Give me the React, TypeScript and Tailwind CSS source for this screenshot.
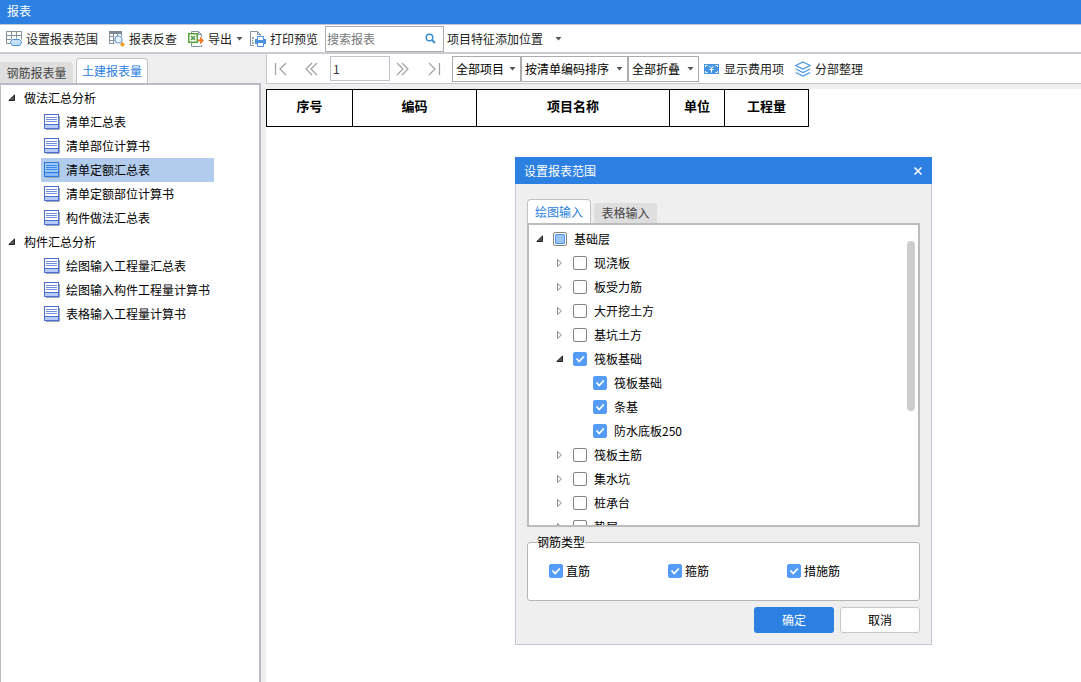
import { useState, type ReactNode } from "react";

function GridRangeIcon() {
  return (
    <svg width="16" height="16" viewBox="0 0 16 16" fill="none" aria-hidden="true">
      <path d="M.5 .5h15v8M.5 .5v12h4M.5 4.500h15M.5 8.500h4.500M5.500 .5v8M10.500 .5v7" stroke="#84919c" />
      <path d="M6.500 8.500h7l2 2v1l-2 3h-7l-2-3v-1z" fill="#c5defa" stroke="#4a90e2" />
    </svg>
  );
}

function GridSearchIcon() {
  return (
    <svg width="16" height="16" viewBox="0 0 16 16" fill="none" aria-hidden="true">
      <path d="M0 0h13v3H0z" fill="#7d8a96" />
      <path d="M.5 2v10.500h5M.5 5.500h5M.5 9.500h5M4.500 2v10M8.500 2v3M12.500 2v3" stroke="#84919c" />
      <circle cx="9.500" cy="8.500" r="3.500" fill="#e8f2fd" stroke="#6f9ed8" strokeWidth="1.200" />
      <path d="M13.300 11l2.700 2.500-2.500 2.500-2.500-2.500z" fill="#f39a1e" />
    </svg>
  );
}

function ExportIcon() {
  return (
    <svg width="16" height="16" viewBox="0 0 16 16" fill="none" aria-hidden="true">
      <path d="M3.500 2V.5h7l3 3V6M3.500 12v3.500h10V14M10.500.5v3h3" stroke="#84919c" />
      <rect x=".75" y="2.750" width="8.500" height="8.500" fill="#fff" stroke="#5aa53f" strokeWidth="1.500" />
      <path d="M3 5l4 4M7 5l-4 4" stroke="#4f9a3c" strokeWidth="1.600" />
      <path d="M10 8.500h2V5.500l4 4-4 4v-3h-2z" fill="#f07d2e" />
    </svg>
  );
}

function PrintPreviewIcon() {
  return (
    <svg width="16" height="16" viewBox="0 0 16 16" fill="none" aria-hidden="true">
      <path d="M4 14.500H.5V.5h7l3 3v1M7.500.5v3h3" stroke="#84919c" />
      <path d="M2 7h2M2 9.500h1M2 12h2" stroke="#84919c" strokeWidth="1.500" />
      <path d="M5 8h11v5H5z" fill="#4a90e2" />
      <path d="M7.500 5.500h6v4h-6zM7.500 11.500h6v4h-6z" fill="#fff" stroke="#4a90e2" />
    </svg>
  );
}

function MoneyIcon() {
  return (
    <svg width="16" height="16" viewBox="0 0 16 16" aria-hidden="true">
      <path d="M0 3h15v10H0z" fill="#4795e6" />
      <path d="M1.500 6V4.500h2M11.500 4.500h2V6M1.500 10v1.500h2M11.500 11.500h2V10" fill="none" stroke="#fff" />
      <path d="M5.500 5l2 2.500 2-2.500M7.500 7.500v4M5.500 8.500h4" fill="none" stroke="#fff" />
    </svg>
  );
}

function LayersIcon() {
  return (
    <svg width="16" height="16" viewBox="0 0 16 16" fill="none" stroke="#4795e6" strokeWidth="1.200" aria-hidden="true">
      <path d="M8 1l7.200 3.500L8 8 .8 4.500zM.8 8L8 11.500 15.200 8M.8 11.500L8 15l7.200-3.500" />
    </svg>
  );
}

function ReportIcon({ active }: { active?: boolean }) {
  return (
    <svg width="16" height="16" viewBox="0 0 16 16" aria-hidden="true">
      <path d="M2 15.500h13.500V2" fill="none" stroke="#a0a8b8" />
      <rect x=".5" y=".5" width="14" height="14" fill={active ? "#9cc8fb" : "#fff"} stroke={active ? "#2c78dc" : "#4a6fcc"} />
      <path d="M1 11h13v3H1z" fill={active ? "#84b8fb" : "#b9ccff"} />
      <path d="M2 3.500h11M2 5.500h11M2 7.500h11" stroke={active ? "#3f87e4" : "#6f8fdc"} />
      <path d="M1 10.500h13" stroke={active ? "#2c78dc" : "#4a6fcc"} />
    </svg>
  );
}

function DownArrow() {
  return (
    <svg width="7" height="4" viewBox="0 0 7 4" fill="#555" aria-hidden="true">
      <path d="M.5 0h6l-3 3.500z" />
    </svg>
  );
}

function Expander({ open }: { open: boolean }) {
  return (
    <svg width="8" height="8" viewBox="0 0 8 8" aria-hidden="true">
      {open ? (
        <path d="M6.500 1v5.500H.8z" fill="#555" stroke="#222" />
      ) : (
        <path d="M1.500 .5v7L5.500 4z" fill="#fff" stroke="#8a8a8a" />
      )}
    </svg>
  );
}

function ToolButton({ icon, label, arrow }: { icon: ReactNode; label: string; arrow?: boolean }) {
  return (
    <button type="button" className={`flex h-6 shrink-0 items-center gap-1 pl-1 text-[#222] ${arrow ? "pr-0" : "pr-1"}`}>
      {icon}
      <span>{label}</span>
      {arrow && <DownArrow />}
    </button>
  );
}

function NavButton({ label, d }: { label: string; d: string }) {
  return (
    <button type="button" aria-label={label} className="flex h-6 w-[30px] shrink-0 items-center pl-1">
      <svg width="16" height="14" viewBox="0 0 16 14" fill="none" stroke="#a0a0a0" strokeWidth="1.200" aria-hidden="true">
        <path d={d} />
      </svg>
    </button>
  );
}

function Dropdown({ label, text, box, width }: { label: string; text: string; box?: boolean; width: string }) {
  return (
    <div
      className={`grid shrink-0 items-center ${width} ${box ? "h-[26px] border border-[#acacac] text-black" : "h-6 text-[#222]"}`}
    >
      <select
        aria-label={label}
        className={`col-start-1 row-start-1 h-full w-full appearance-none bg-transparent outline-none ${box ? "pl-[3px]" : ""}`}
      >
        <option>{text}</option>
      </select>
      <span className={`pointer-events-none col-start-1 row-start-1 justify-self-end ${box ? "pr-1" : "pr-0"}`}>
        <DownArrow />
      </span>
    </div>
  );
}

function Check({ label, initial, partial, gap }: { label: string; initial?: boolean; partial?: boolean; gap: string }) {
  const [on, setOn] = useState(Boolean(initial));
  return (
    <label className={`flex items-center text-black ${gap}`}>
      <span className="grid size-[14px]">
        <input
          type="checkbox"
          checked={on}
          onChange={() => setOn(!on)}
          className="col-start-1 row-start-1 size-[14px] appearance-none rounded-[2px] border border-[#858585] bg-white checked:border-[#549cf8] checked:bg-[#549cf8]"
        />
        {on && (
          <svg width="14" height="14" viewBox="0 0 14 14" fill="none" className="pointer-events-none col-start-1 row-start-1">
            <path d="M3.500 6.500L6.200 9.500 10.800 4.500" stroke="#fff" strokeWidth="1.800" />
          </svg>
        )}
        {partial && !on && (
          <span className="pointer-events-none col-start-1 row-start-1 m-[2px] rounded-[1px] border border-[#4b97f7] bg-[#99c5fb]" />
        )}
      </span>
      <span>{label}</span>
    </label>
  );
}

const reportGroups = [
  { title: "做法汇总分析", items: ["清单汇总表", "清单部位计算书", "清单定额汇总表", "清单定额部位计算书", "构件做法汇总表"] },
  { title: "构件汇总分析", items: ["绘图输入工程量汇总表", "绘图输入构件工程量计算书", "表格输入工程量计算书"] },
];

type Node = { label: string; level: 0 | 1 | 2; open?: boolean; checked?: boolean; partial?: boolean };

const componentTree: Node[] = [
  { label: "基础层", level: 0, open: true, partial: true },
  { label: "现浇板", level: 1 },
  { label: "板受力筋", level: 1 },
  { label: "大开挖土方", level: 1 },
  { label: "基坑土方", level: 1 },
  { label: "筏板基础", level: 1, open: true, checked: true },
  { label: "筏板基础", level: 2, checked: true },
  { label: "条基", level: 2, checked: true },
  { label: "防水底板250", level: 2, checked: true },
  { label: "筏板主筋", level: 1 },
  { label: "集水坑", level: 1 },
  { label: "桩承台", level: 1 },
  { label: "垫层", level: 1 },
];

const indents = ["pl-[7px]", "pl-[27px]", "pl-[47px]"];

function Sidebar() {
  const [selected, setSelected] = useState("清单定额汇总表");
  return (
    <aside className="flex w-[261px] shrink-0 flex-col pt-1">
      <div role="tablist" className="flex items-end gap-[3px]">
        <button type="button" role="tab" aria-selected="false" className="h-[21px] w-[73px] rounded-tr bg-[#dedede] text-[#444]">
          钢筋报表量
        </button>
        <button
          type="button"
          role="tab"
          aria-selected="true"
          className="h-[25px] w-[72px] rounded-t border border-b-0 border-[#bfc4cb] bg-white text-[#2b7fe1]"
        >
          土建报表量
        </button>
      </div>
      <nav className="flex-1 border-t-2 border-r-2 border-l border-[#b9bcc2] bg-white pt-px">
        {reportGroups.map((group) => (
          <section key={group.title}>
            <h2 className="flex h-6 items-center gap-2 pl-[7px] text-black">
              <Expander open />
              {group.title}
            </h2>
            {group.items.map((item) => (
              <button
                key={item}
                type="button"
                onClick={() => setSelected(item)}
                className={`ml-10 flex h-6 w-[173px] items-center gap-[6px] pl-[3px] text-black ${item === selected ? "bg-[#b1ccec]" : ""}`}
              >
                <ReportIcon active={item === selected} />
                {item}
              </button>
            ))}
          </section>
        ))}
      </nav>
    </aside>
  );
}

function ReportArea() {
  return (
    <main className="flex min-w-0 flex-1 flex-col">
      <div className="flex h-[30px] items-center border-b border-l border-[#c3c8cf] bg-white pl-px">
        <div className="flex items-center gap-px">
          <NavButton label="首页" d="M3.500 1v12M14 1L8 7l6 6" />
          <NavButton label="上一页" d="M9 1L3 7l6 6M14 1L8 7l6 6" />
          <input aria-label="页码" defaultValue="1" className="h-[25px] w-[60px] border border-[#bfc4cb] px-[2px] text-[#333] outline-none" />
          <NavButton label="下一页" d="M2 1l6 6-6 6M7 1l6 6-6 6" />
          <NavButton label="末页" d="M13.500 1v12M3 1l6 6-6 6" />
        </div>
        <div className="flex">
          <Dropdown box label="项目范围" text="全部项目" width="w-[69px]" />
          <Dropdown box label="排序方式" text="按清单编码排序" width="w-[107px]" />
          <Dropdown box label="折叠方式" text="全部折叠" width="w-[71px]" />
        </div>
        <div className="flex gap-[3px] pl-px">
          <ToolButton icon={<MoneyIcon />} label="显示费用项" />
          <ToolButton icon={<LayersIcon />} label="分部整理" />
        </div>
      </div>
      <div className="mt-[5px] flex-1 bg-white">
        <table className="w-[543px] table-fixed border-collapse text-[13px] text-black">
          <thead>
            <tr className="h-[37px]">
              <th className="w-[86px] border border-black pb-1">序号</th>
              <th className="w-[124px] border border-black pb-1">编码</th>
              <th className="w-[193px] border border-black pb-1">项目名称</th>
              <th className="w-[55px] border border-black pb-1">单位</th>
              <th className="w-[84px] border border-black pb-1">工程量</th>
            </tr>
          </thead>
        </table>
      </div>
    </main>
  );
}

function RangeDialog() {
  return (
    <div
      role="dialog"
      aria-label="设置报表范围"
      className="absolute top-[157px] left-[515px] flex w-[417px] flex-col border border-t-0 border-[#bfc8d4] bg-[#efefef]"
    >
      <header className="-mx-px flex h-[27px] items-center justify-between bg-[#2c80e2] pr-[9px] pl-[9px] text-white">
        <h2>设置报表范围</h2>
        <button type="button" aria-label="关闭">
          <svg width="10" height="8" viewBox="0 0 10 8" fill="none" stroke="#fff" strokeWidth="1.500" aria-hidden="true">
            <path d="M1.500.5l7 7M8.500.5l-7 7" />
          </svg>
        </button>
      </header>
      <div className="flex flex-col px-[11px] pt-[15px] pb-[11px]">
        <div role="tablist" className="flex items-end gap-[3px]">
          <button
            type="button"
            role="tab"
            aria-selected="true"
            className="h-6 w-16 rounded-t border border-b-0 border-[#bfc4cb] bg-white text-[#2b7fe1]"
          >
            绘图输入
          </button>
          <button type="button" role="tab" aria-selected="false" className="h-5 w-[63px] rounded-t bg-[#dedede] text-[#444]">
            表格输入
          </button>
        </div>
        <div className="flex h-[304px] justify-between overflow-hidden border-2 border-[#bbbcbe] bg-white pt-[2px] pr-[3px]">
          <ul>
            {componentTree.map((node, i) => (
              <li key={i} className={`flex h-6 items-center gap-[9px] ${indents[node.level]}`}>
                {node.level < 2 ? <Expander open={Boolean(node.open)} /> : <span className="w-2" />}
                <Check label={node.label} initial={node.checked} partial={node.partial} gap="gap-[7px]" />
              </li>
            ))}
          </ul>
          <div className="mt-[14px] h-[170px] w-2 rounded-full bg-[#cdcdcd]" />
        </div>
        <fieldset className="mt-[7px] rounded-[3px] border border-[#b4b4b4] bg-white pb-5 pl-[21px]">
          <legend className="-ml-3 h-4 leading-4 text-black">钢筋类型</legend>
          <div className="grid grid-cols-[119px_119px_119px] pt-3">
            <Check label="直筋" initial gap="gap-[3px]" />
            <Check label="箍筋" initial gap="gap-[3px]" />
            <Check label="措施筋" initial gap="gap-[3px]" />
          </div>
        </fieldset>
        <div className="mt-[6px] flex justify-end gap-[6px]">
          <button type="button" className="h-[26px] w-20 rounded-[3px] bg-[#2c80e2] text-white">
            确定
          </button>
          <button type="button" className="h-[26px] w-20 rounded-[3px] border border-[#c8c8c8] bg-white text-black">
            取消
          </button>
        </div>
      </div>
    </div>
  );
}

export default function App() {
  return (
    <div className="relative flex min-h-screen flex-col bg-[#efefef] font-['Noto_Sans_CJK_SC',sans-serif] text-[12px] leading-[18px]">
      <header className="flex h-[25px] items-center border-b border-[#bfc8d4] bg-[#2c80e2] pl-[7px] text-white">
        <h1 className="pb-[2px]">报表</h1>
      </header>
      <div className="flex h-[29px] items-center gap-[3px] border-b-2 border-[#c8ccd2] bg-white pl-[2px]">
        <ToolButton icon={<GridRangeIcon />} label="设置报表范围" />
        <ToolButton icon={<GridSearchIcon />} label="报表反查" />
        <ToolButton icon={<ExportIcon />} label="导出" arrow />
        <ToolButton icon={<PrintPreviewIcon />} label="打印预览" />
        <div className="flex h-[26px] w-[119px] shrink-0 items-center border border-[#acacac] pr-[7px] pl-px">
          <input aria-label="搜索报表" placeholder="搜索报表" className="w-full min-w-0 outline-none placeholder:text-[#777]" />
          <svg width="11" height="11" viewBox="0 0 11 11" fill="none" stroke="#3c8fd0" className="shrink-0" aria-hidden="true">
            <circle cx="4.500" cy="4.500" r="3.300" strokeWidth="1.500" />
            <path d="M7 7l3 3" strokeWidth="2" />
          </svg>
        </div>
        <Dropdown label="项目特征添加位置" text="项目特征添加位置" width="w-[115px]" />
      </div>
      <div className="flex flex-1 gap-[5px]">
        <Sidebar />
        <ReportArea />
      </div>
      <RangeDialog />
    </div>
  );
}
